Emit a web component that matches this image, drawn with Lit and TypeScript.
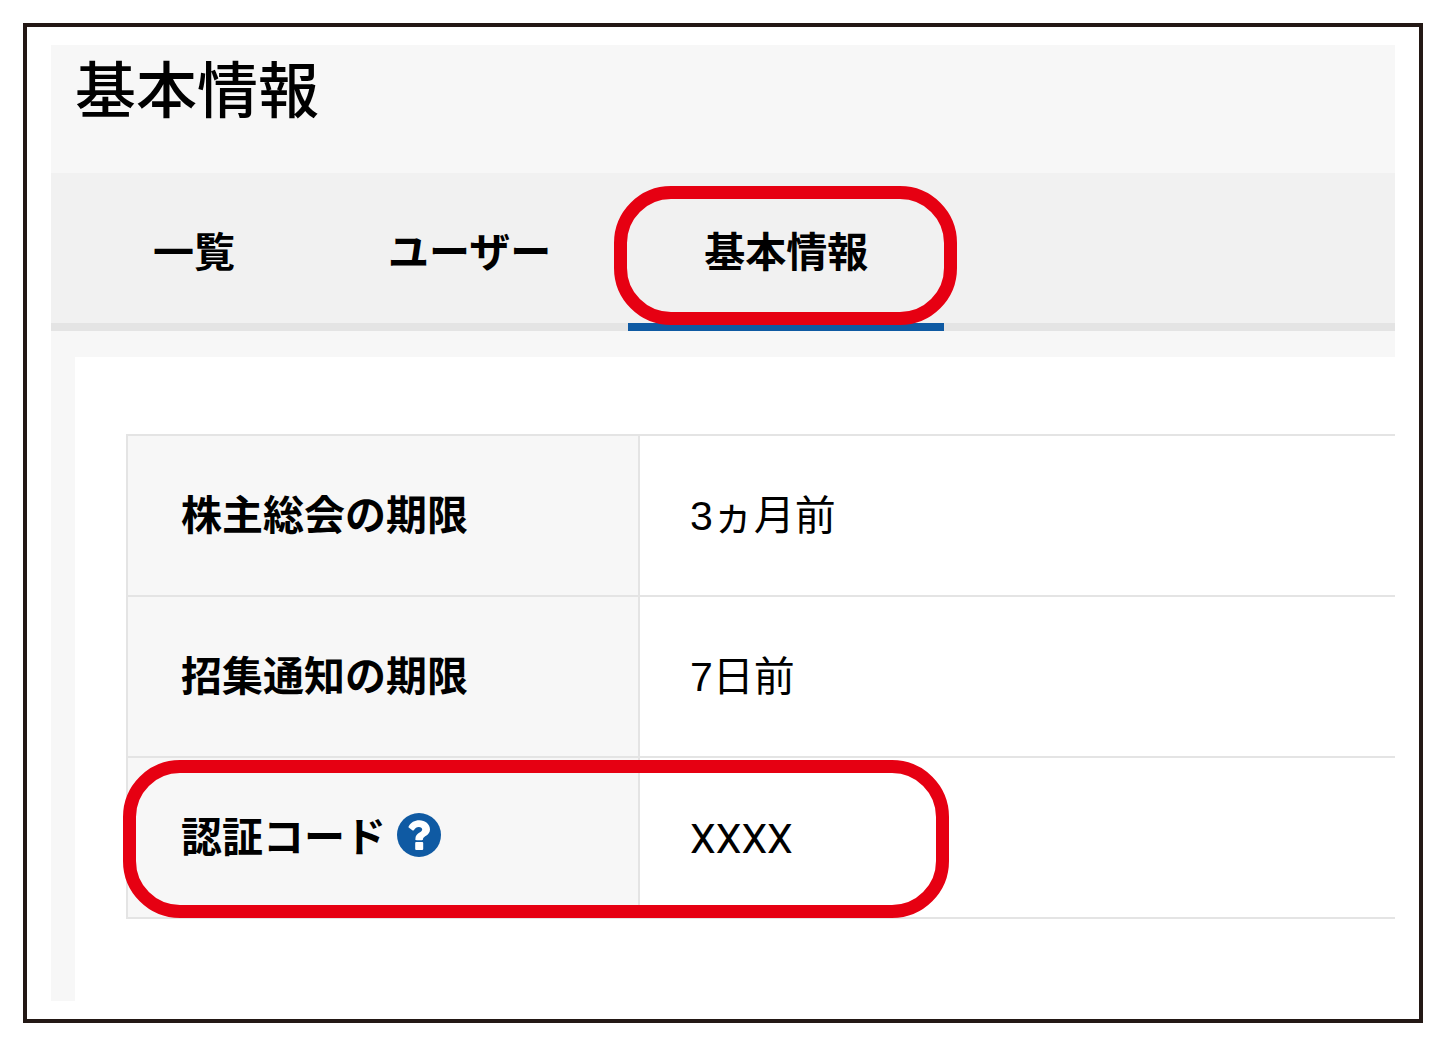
import { LitElement, html, css, svg } from "lit";
import { customElement, state } from "lit/decorators.js";
import { classMap } from "lit/directives/class-map.js";

interface Tab {
  id: string;
  label: string;
  marked?: boolean;
}

interface Setting {
  label: string;
  value: string;
  help?: boolean;
  marked?: boolean;
}

const TABS: Tab[] = [
  { id: "list", label: "一覧" },
  { id: "users", label: "ユーザー" },
  { id: "basic", label: "基本情報", marked: true },
];

const SETTINGS: Setting[] = [
  { label: "株主総会の期限", value: "3ヵ月前" },
  { label: "招集通知の期限", value: "7日前" },
  { label: "認証コード", value: "XXXX", help: true, marked: true },
];

const helpIcon = svg`
  <circle cx="22" cy="22" r="22" fill="#0f5aa3"></circle>
  <path d="M11.6 13.4 C14 9.4 17.4 7.2 22.4 7.2 C28 7.2 33 11 33 16.4 C33 22.4 26 23 26 26 C26 26.8 25.6 27.2 24.8 27.2 L19.6 27.2 C18.8 27.2 18.4 26.8 18.4 26 C18.4 19.4 25.2 20 25.2 16.6 C25.2 14.8 23.8 13.9 21.9 13.9 C19.4 13.9 18.4 15.2 17 16.9 C16.5 17.5 15.9 17.6 15.3 17.2 L12 14.8 C11.4 14.4 11.3 13.9 11.6 13.4 Z"
    fill="#fff"></path>
  <rect x="18.2" y="29" width="8" height="8" rx="1" fill="#fff"></rect>
`;

@customElement("app-root")
export class AppRoot extends LitElement {
  static styles = css`
    :host {
      display: block;
      padding: 23px;
      background: #fff;
      color: #000;
      font-family: "Liberation Sans", "Noto Sans CJK JP", sans-serif;
      font-size: 41px;
      line-height: 50px;
    }
    *,
    *::before,
    *::after {
      box-sizing: border-box;
    }
    .frame {
      border: 4px solid #231815;
      padding: 18px 24px;
    }
    .screen {
      background: #f7f7f7;
    }
    .title {
      margin: 0;
      padding: 17px 24px 51px;
      font-size: 61px;
      line-height: 60px;
      font-weight: 500;
    }
    .tabs {
      display: flex;
      gap: 1px;
      padding: 0 26px;
      background: #f1f1f1;
      box-shadow: inset 0 -8px #e4e4e4;
    }
    .tab {
      position: relative;
      padding: 55px 76px 45px;
      border-bottom: 8px solid transparent;
      color: inherit;
      font-weight: 700;
      text-decoration: none;
      white-space: nowrap;
    }
    .tab.active {
      border-bottom-color: #0f5aa3;
    }
    .ring {
      position: absolute;
      border: 13px solid #e60012;
      border-radius: 57px;
      pointer-events: none;
    }
    .tab .ring {
      inset: 13px -13px -2px -14px;
    }
    .card {
      margin: 26px 0 0 24px;
      padding: 77px 0 82px 51px;
      background: #fff;
    }
    .body {
      display: flow-root;
    }
    .settings {
      width: 100%;
      border-collapse: separate;
      border-spacing: 0;
      border-top: 2px solid #e4e4e4;
    }
    .name,
    .value {
      height: 161px;
      padding: 0 50px;
      border-left: 2px solid #e4e4e4;
      border-bottom: 2px solid #e4e4e4;
      text-align: left;
      white-space: nowrap;
    }
    .name {
      position: relative;
      width: 512px;
      padding: 0 53px;
      background: #f7f7f7;
      font-weight: 700;
    }
    .name .ring {
      top: 2px;
      left: -5px;
      z-index: 1;
      width: 826px;
      height: 158px;
    }
    .label {
      display: flex;
      align-items: flex-start;
      gap: 11px;
    }
    .help {
      display: block;
      width: 44px;
      height: 44px;
      padding: 0;
      border: 0;
      border-radius: 50%;
      background: none;
      cursor: pointer;
    }
    .icon {
      display: block;
      width: 100%;
      height: 100%;
    }
    .code {
      padding-top: 2px;
      font-family: Roboto, "Noto Sans CJK JP", sans-serif;
    }
  `;

  @state() private active = "basic";

  private select(event: Event, id: string) {
    event.preventDefault();
    this.active = id;
  }

  private renderTab(tab: Tab) {
    const current = tab.id === this.active;
    return html`<a
      class=${classMap({ tab: true, active: current })}
      href="#${tab.id}"
      aria-current=${current ? "page" : "false"}
      @click=${(e: Event) => this.select(e, tab.id)}
      >${tab.label}${tab.marked ? html`<span class="ring"></span>` : null}</a
    >`;
  }

  private renderSetting(row: Setting) {
    return html`<tr>
      <th class="name" scope="row">
        <div class="label">
          <span>${row.label}</span>
          ${row.help
            ? html`<button class="help" type="button" aria-label="ヘルプ">
                <svg class="icon" viewBox="0 0 44 44" aria-hidden="true">${helpIcon}</svg>
              </button>`
            : null}
        </div>
        ${row.marked ? html`<span class="ring"></span>` : null}
      </th>
      <td class=${classMap({ value: true, code: !!row.marked })}>${row.value}</td>
    </tr>`;
  }

  render() {
    return html`
      <div class="frame">
        <main class="screen">
          <h1 class="title">基本情報</h1>
          <nav class="tabs">${TABS.map((t) => this.renderTab(t))}</nav>
          <div class="body">
            <section class="card">
              <table class="settings">
                <tbody>
                  ${SETTINGS.map((s) => this.renderSetting(s))}
                </tbody>
              </table>
            </section>
          </div>
        </main>
      </div>
    `;
  }
}
